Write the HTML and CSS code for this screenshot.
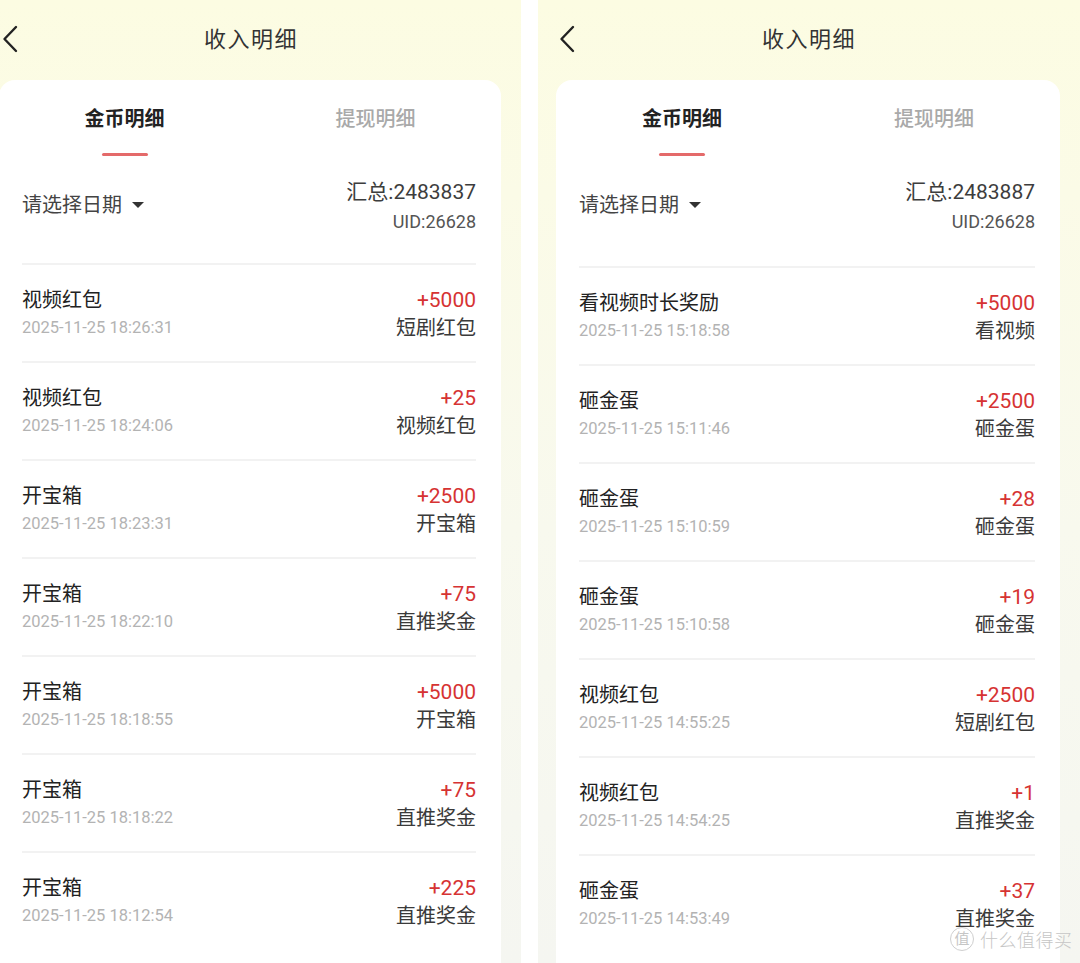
FILE: index.html
```html
<!DOCTYPE html>
<html lang="zh-CN">
<head>
<meta charset="utf-8">
<title>收入明细</title>
<link rel="stylesheet" href="styles.css">
</head>
<body>
<div class="shot">
  <section class="panel panel--left">
    <header class="topbar">
      <svg class="back" width="16" height="28" viewBox="0 0 16 28"><path d="M14 2 L2.5 14 L14 26" fill="none" stroke="#222" stroke-width="2.4" stroke-linecap="round" stroke-linejoin="round"/></svg>
      <h1 class="title">收入明细</h1>
    </header>
    <div class="card">
      <nav class="tabs">
        <div class="tab tab--active">金币明细<span class="bar"></span></div>
        <div class="tab">提现明细</div>
      </nav>
      <div class="body">
        <div class="summary">
          <div class="picker">请选择日期<span class="caret"></span></div>
          <div class="totals">
            <div class="total">汇总:2483837</div>
            <div class="uid">UID:26628</div>
          </div>
        </div>
        <ul class="list">
          <li class="row"><div class="l"><div class="name">视频红包</div><div class="time">2025-11-25 18:26:31</div></div><div class="r"><div class="amt">+5000</div><div class="src">短剧红包</div></div></li>
          <li class="row"><div class="l"><div class="name">视频红包</div><div class="time">2025-11-25 18:24:06</div></div><div class="r"><div class="amt">+25</div><div class="src">视频红包</div></div></li>
          <li class="row"><div class="l"><div class="name">开宝箱</div><div class="time">2025-11-25 18:23:31</div></div><div class="r"><div class="amt">+2500</div><div class="src">开宝箱</div></div></li>
          <li class="row"><div class="l"><div class="name">开宝箱</div><div class="time">2025-11-25 18:22:10</div></div><div class="r"><div class="amt">+75</div><div class="src">直推奖金</div></div></li>
          <li class="row"><div class="l"><div class="name">开宝箱</div><div class="time">2025-11-25 18:18:55</div></div><div class="r"><div class="amt">+5000</div><div class="src">开宝箱</div></div></li>
          <li class="row"><div class="l"><div class="name">开宝箱</div><div class="time">2025-11-25 18:18:22</div></div><div class="r"><div class="amt">+75</div><div class="src">直推奖金</div></div></li>
          <li class="row"><div class="l"><div class="name">开宝箱</div><div class="time">2025-11-25 18:12:54</div></div><div class="r"><div class="amt">+225</div><div class="src">直推奖金</div></div></li>
        </ul>
      </div>
    </div>
  </section>

  <section class="panel panel--right">
    <header class="topbar">
      <svg class="back" width="16" height="28" viewBox="0 0 16 28"><path d="M14 2 L2.5 14 L14 26" fill="none" stroke="#222" stroke-width="2.4" stroke-linecap="round" stroke-linejoin="round"/></svg>
      <h1 class="title">收入明细</h1>
    </header>
    <div class="card">
      <nav class="tabs">
        <div class="tab tab--active">金币明细<span class="bar"></span></div>
        <div class="tab">提现明细</div>
      </nav>
      <div class="body">
        <div class="summary summary--tall">
          <div class="picker">请选择日期<span class="caret"></span></div>
          <div class="totals">
            <div class="total">汇总:2483887</div>
            <div class="uid">UID:26628</div>
          </div>
        </div>
        <ul class="list">
          <li class="row"><div class="l"><div class="name">看视频时长奖励</div><div class="time">2025-11-25 15:18:58</div></div><div class="r"><div class="amt">+5000</div><div class="src">看视频</div></div></li>
          <li class="row"><div class="l"><div class="name">砸金蛋</div><div class="time">2025-11-25 15:11:46</div></div><div class="r"><div class="amt">+2500</div><div class="src">砸金蛋</div></div></li>
          <li class="row"><div class="l"><div class="name">砸金蛋</div><div class="time">2025-11-25 15:10:59</div></div><div class="r"><div class="amt">+28</div><div class="src">砸金蛋</div></div></li>
          <li class="row"><div class="l"><div class="name">砸金蛋</div><div class="time">2025-11-25 15:10:58</div></div><div class="r"><div class="amt">+19</div><div class="src">砸金蛋</div></div></li>
          <li class="row"><div class="l"><div class="name">视频红包</div><div class="time">2025-11-25 14:55:25</div></div><div class="r"><div class="amt">+2500</div><div class="src">短剧红包</div></div></li>
          <li class="row"><div class="l"><div class="name">视频红包</div><div class="time">2025-11-25 14:54:25</div></div><div class="r"><div class="amt">+1</div><div class="src">直推奖金</div></div></li>
          <li class="row"><div class="l"><div class="name">砸金蛋</div><div class="time">2025-11-25 14:53:49</div></div><div class="r"><div class="amt">+37</div><div class="src">直推奖金</div></div></li>
        </ul>
      </div>
    </div>
  </section>

  <div class="watermark"><span class="wm-badge">值</span><span class="wm-text">什么值得买</span></div>
</div>
</body>
</html>
```

FILE: styles.css
```css
* { box-sizing: border-box; margin: 0; padding: 0; }

html, body {
  width: 1080px;
  height: 963px;
  overflow: hidden;
  background: #ffffff;
}

body {
  font-family: Roboto, "Noto Sans CJK SC", sans-serif;
  color: #333;
}

.shot {
  position: relative;
  display: flex;
  gap: 17px;
  width: 1080px;
  height: 963px;
  overflow: hidden;
}

.panel {
  flex: 0 0 540px;
  height: 963px;
  background: linear-gradient(180deg, #fcfce2 0%, #fbfbe7 20%, #f8f9ee 55%, #f5f6f1 100%);
  overflow: hidden;
}

.panel--left { margin-left: -19px; }
.panel--right { flex: 1 1 auto; }

.topbar {
  position: relative;
  height: 80px;
  display: flex;
  align-items: center;
  justify-content: center;
}

.back {
  position: absolute;
  left: 21px;
  top: 25px;
}

.title {
  font-size: 22px;
  font-weight: 400;
  color: #333;
  letter-spacing: 1.5px;
  margin-top: -6px;
}

.card {
  margin: 0 20px 0 18px;
  background: #fff;
  border-radius: 16px 16px 0 0;
  height: 900px;
}

.tabs {
  display: flex;
  height: 80px;
}

.tab {
  flex: 1;
  display: flex;
  flex-direction: column;
  align-items: center;
  padding-top: 24px;
  font-size: 20px;
  line-height: 30px;
  font-weight: 500;
  color: #a9a9a9;
}

.tab--active {
  color: #222;
  font-weight: 700;
}

.bar {
  display: block;
  width: 46px;
  height: 3px;
  margin-top: 19px;
  background: #e46a6a;
  border-radius: 2px;
}

.body {
  padding: 0 25px 0 23px;
}

.summary {
  display: flex;
  justify-content: space-between;
  align-items: flex-start;
  height: 103px;
  padding-top: 18px;
}

.summary--tall { height: 106px; }

.picker {
  display: flex;
  align-items: center;
  margin-top: 13px;
  font-size: 20px;
  line-height: 28px;
  color: #444;
}

.caret {
  display: inline-block;
  width: 0;
  height: 0;
  margin-left: 10px;
  border-left: 6px solid transparent;
  border-right: 6px solid transparent;
  border-top: 6px solid #333;
}

.totals {
  text-align: right;
}

.total {
  font-size: 21px;
  line-height: 28px;
  color: #3d3d3d;
}

.uid {
  font-size: 18px;
  line-height: 32px;
  color: #555;
}

.list {
  list-style: none;
}

.row {
  display: flex;
  justify-content: space-between;
  height: 98px;
  border-top: 2px solid #f2f2f2;
  padding-top: 20px;
}

.name {
  font-size: 20px;
  line-height: 30px;
  font-weight: 400;
  color: #222;
}

.time {
  font-size: 16.5px;
  line-height: 26px;
  color: #b3b3b3;
}

.r {
  text-align: right;
}

.amt {
  font-size: 21px;
  line-height: 30px;
  color: #d63333;
}

.src {
  font-size: 20px;
  line-height: 26px;
  color: #3a3a3a;
}

.watermark {
  position: absolute;
  left: 950px;
  top: 926px;
  display: flex;
  align-items: center;
  gap: 6px;
  color: #c6c6c6;
}

.wm-badge {
  display: inline-flex;
  align-items: center;
  justify-content: center;
  width: 24px;
  height: 24px;
  border: 1.5px solid #cfcfcf;
  border-radius: 50%;
  font-size: 15px;
  line-height: 1;
}

.wm-text {
  font-size: 18px;
  letter-spacing: 0.5px;
  font-weight: 300;
}
```
